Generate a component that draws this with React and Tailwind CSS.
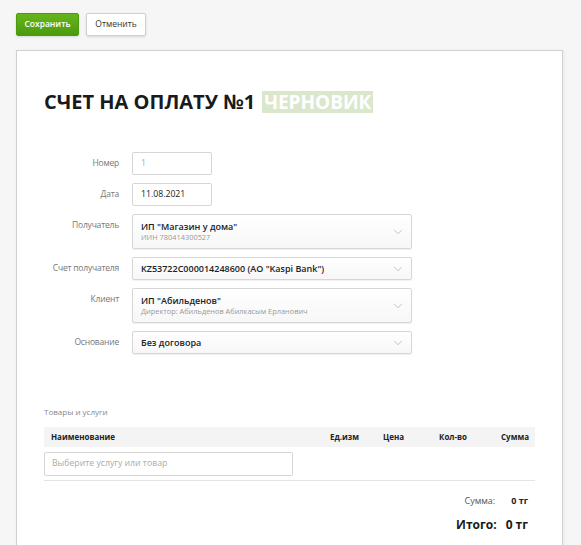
import { ChevronDown } from 'lucide-react';

const font = { fontFamily: "'Open Sans', 'Liberation Sans', sans-serif" };

// Form field with a label column on the left
function Row({ label, children }) {
  return (
    <div className="flex items-start">
      <div className="w-[75px] shrink-0 whitespace-nowrap pt-[5px] text-right text-[8.5px] tracking-[-0.2px] text-[#777]">{label}</div>
      <div className="ml-[13px]">{children}</div>
    </div>
  );
}

function TextInput({ value, muted }) {
  return (
    <div className={`flex h-[23px] w-[80px] items-center rounded-[2px] border border-[#d6d6d6] bg-white px-[8px] text-[8.7px] ${muted ? 'text-[#aaa]' : 'text-[#222]'}`}>
      {value}
    </div>
  );
}

function Select({ title, sub }) {
  return (
    <div className={`flex w-[280px] items-center justify-between rounded-[2px] border border-[#d6d6d6] bg-gradient-to-b from-white to-[#f7f7f7] pl-[8px] pr-[6px] shadow-[0_1px_1px_rgba(0,0,0,0.06)] ${sub ? 'h-[35px]' : 'h-[23px]'}`}>
      <div className="flex flex-col leading-tight">
        <span className="text-[9px] font-semibold text-[#222]">{title}</span>
        {sub && <span className="mt-[1px] text-[7.4px] text-[#999]">{sub}</span>}
      </div>
      <ChevronDown className="h-[14px] w-[14px] text-[#aaa]" strokeWidth={1.2} />
    </div>
  );
}

export default function App() {
  return (
    <div className="min-h-[545px] bg-[#f6f6f6] pt-[13px] pl-[16px]" style={font}>
      <div className="flex gap-[7px]">
        <button className="h-[23px] w-[63px] rounded-[2px] border border-[#4e9a0e] bg-gradient-to-b from-[#67b51c] to-[#4c9a0c] text-[8.5px] font-semibold text-white shadow-sm">
          Сохранить
        </button>
        <button className="h-[23px] w-[60px] rounded-[2px] border border-[#d0d0d0] bg-white text-[8.5px] text-[#333] shadow-sm">
          Отменить
        </button>
      </div>

      <div className="mt-[14px] h-[500px] w-[547px] border border-[#d0d0d0] bg-white pl-[27px] pr-[27px] shadow-[1px_1px_4px_rgba(0,0,0,0.06)]">
        <h1 className="mt-[40px] flex items-center text-[20px] font-bold leading-[22px] text-[#1a1a1a]">
          СЧЕТ НА ОПЛАТУ №1
          <span className="ml-[7px] bg-[#dbe7cd] px-[2px] text-[19px] text-white">ЧЕРНОВИК</span>
        </h1>

        <div className="mt-[39px] flex flex-col gap-[8px]">
          <Row label="Номер"><TextInput value="1" muted /></Row>
          <Row label="Дата"><TextInput value="11.08.2021" /></Row>
          <Row label="Получатель"><Select title='ИП "Магазин у дома"' sub="ИИН 780414300527" /></Row>
          <Row label="Счет получателя"><Select title='KZ53722C000014248600 (АО "Kaspi Bank")' /></Row>
          <Row label="Клиент"><Select title='ИП "Абильденов"' sub="Директор: Абильденов Абилкасым Ерланович" /></Row>
          <Row label="Основание"><Select title="Без договора" /></Row>
        </div>

        <div className="mt-[52px] text-[8px] text-[#888]">Товары и услуги</div>

        <div className="mt-[9px] w-[491px]">
          <div className="flex h-[20px] items-center bg-[#f4f4f4] text-[8px] font-bold text-[#222]">
            <span className="flex-1 pl-[7px]">Наименование</span>
            <span className="w-[53px]">Ед.изм</span>
            <span className="w-[56px]">Цена</span>
            <span className="w-[62px]">Кол-во</span>
            <span className="w-[34px]">Сумма</span>
          </div>
          <div className="border-b border-[#e4e4e4] pt-[5px] pb-[4px]">
            <div className="flex h-[24px] w-[249px] items-center rounded-[2px] border border-[#d6d6d6] px-[7px] text-[8.7px] text-[#aaa]">
              Выберите услугу или товар
            </div>
          </div>

          <div className="mt-[13px] flex justify-end pr-[7px] text-[9px]">
            <span className="text-[#555]">Сумма:</span>
            <span className="ml-[16px] font-bold text-[#222]">0 тг</span>
          </div>
          <div className="mt-[8px] flex justify-end pr-[7px] text-[12px] font-bold text-[#1a1a1a]">
            <span>Итого:</span>
            <span className="ml-[9px]">0 тг</span>
          </div>
        </div>
      </div>
    </div>
  );
}
